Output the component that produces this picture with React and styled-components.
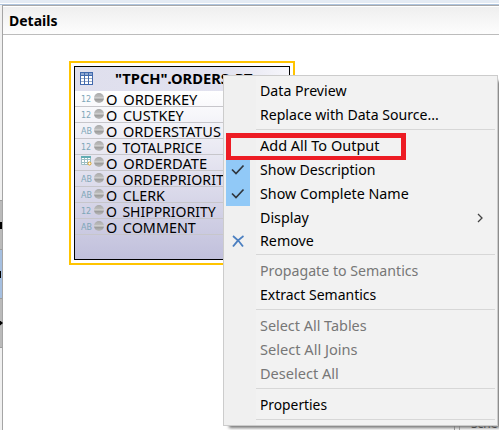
import React from 'react';
import styled, { createGlobalStyle } from 'styled-components';

const Global = createGlobalStyle`
  * { box-sizing: border-box; }
  body { margin: 0; overflow: hidden; background: #fff; font-family: "Noto Sans", "Open Sans", sans-serif; }
`;
const Window = styled.div`
  position: relative; width: 499px; height: 430px; overflow: hidden;
  display: grid; grid-template-rows: 5px minmax(0, 1fr); background: #fff; color: #000;
`;
const TopBar = styled.div`
  background: linear-gradient(#e4ebf4 0 3px, #fff 3px 4px, #aec4de 4px);
`;
const Workspace = styled.div`display: grid; grid-template-columns: 3px minmax(0, 1fr);`;
const Rail = styled.div`background: #f0f0f0; border-right: 1px solid #a5a5a5; padding-top: 195px;`;
const RailTab = styled.div`
  width: 2px; height: 49px; background: ${p => p.$active ? '#a5bfe0' : '#bababa'};
  border-top: 1px solid #9d9d9d; display: flex; align-items: center;
`;
const RailEnd = styled.div`width: 2px; height: 1px; background: #9d9d9d;`;
const RailMark = styled.span`width: ${p => p.$w}px; height: ${p => p.$arrow ? 5 : 7}px; background: #000; flex: none; clip-path: ${p => p.$arrow ? 'polygon(0 0,100% 50%,0 100%)' : 'none'};`;
const Pane = styled.section`border-top: 1px solid #a8a8a8; min-width: 0;`;
const PaneTitle = styled.header`
  height: 29px; border-top: 1px solid #fff; border-bottom: 1px solid #bcbcbc; background: linear-gradient(#efefef, #fdfdfd);
  padding-left: 6px; font-weight: 700; font-size: 14px; line-height: 27px;
`;
const Canvas = styled.div`position: relative;`;
const TableNode = styled.div`
  position: absolute; left: 66px; top: 26px; width: 226px; height: 204px; border: 2px solid #ffc400; padding: 3px; background: #fff;
`;
const TableBody = styled.div`height: 100%; border: 1px solid #000; background: linear-gradient(#fff 24px, #c1c0dc);`;
const TableHead = styled.div`
  height: 24px; background: linear-gradient(90deg, #dfdfed, #e2e2ef 70%, #f6f6fb);
  display: flex; align-items: center; padding: 0 0 2px 5px; gap: 22px; font-weight: 700; font-size: 15px; white-space: nowrap;
`;
const FieldRow = styled.div`
  height: 16px; border-bottom: 1px solid #c7c6cb; display: flex; align-items: center; padding-left: 6px;
`;
const FieldType = styled.span`width: 13px; height: 14px; font: 8px/15px "DejaVu Sans", sans-serif; color: #7da6b8; flex: none;`;
const Ball = styled.span`
  width: 10px; height: 10px; border-radius: 50%; flex: none; margin: 0 2px 2px 0;
  background: linear-gradient(#a9a9a9, #bdbdbd 40%, #dcdcdc 50%, #999 60%, #bcbcbc);
`;
const Fit = styled.span`
  display: block; white-space: pre; flex: none; transform-origin: 0 50%;
`;
const FieldName = styled.span`display: block; font-size: 15px; line-height: 16px; word-spacing: 2px;`;
const Menu = styled.nav`
  position: absolute; left: 223px; top: 75px; width: 275px; height: 351px; z-index: 2;
  border: 1px solid #ccc; background: linear-gradient(90deg, #f0f0f0 0 32px, #f2f2f2 32px);
  padding: 3px 2px 0; box-shadow: 4px 4px 3px -2px #777;
`;
const MenuItem = styled.div`
  height: ${p => p.$short ? 23 : 24}px; display: grid; grid-template-columns: 24px 10px 1fr 18px; align-items: center; color: ${p => p.$disabled ? '#777' : '#000'};
`;
const IconCell = styled.span`
  height: 24px; display: grid; place-items: center; background: ${p => p.$checked ? '#91c9f7' : 'transparent'};
`;
const Label = styled.span`grid-column: 3; font-size: 14px; line-height: 24px;`;
const Separator = styled.div`height: 7px; margin-left: 30px; background: linear-gradient(#d7d7d7, #d7d7d7) 0 2px / 100% 1px no-repeat;`;
const Highlight = styled.div`position: absolute; z-index: 3; left: 226px; top: 133px; width: 180px; height: 27px; border: 4px solid #ed1c24; border-width: 5px 5px 4px;`;
const Below = styled.div`
  position: absolute; left: 454px; bottom: 0; width: 45px; height: 13px; border-left: 1px solid #999; padding-left: 4px;
`;
const BelowText = styled.div`border-left: 1px solid #aaa; height: 13px; padding-left: 11px; font-size: 12px; line-height: 14px;`;

function FitText({ width, children }) {
  const ref = React.useRef(null);
  const [scale, setScale] = React.useState(1);
  React.useLayoutEffect(() => { setScale(width / ref.current.offsetWidth); }, [width]);
  return <Fit ref={ref} style={{ transform: `scaleX(${scale})`, width: 'max-content' }}>{children}</Fit>;
}
const GridIcon = () => <svg width="13" height="13" viewBox="0 0 13 13" shapeRendering="crispEdges">
  <path fill="#fff" d="M0 0h13v13H0z"/><path fill="#8fa9d2" d="M0 0h13v3H0z"/>
  <path fill="none" stroke="#9dacc6" d="M1 6.5h12M1 9.5h12"/><path fill="none" stroke="#4169ad" d="M.5.5h12v12H.5zM4.5 0v13M8.5 0v13M0 3.5h13"/>
</svg>;
const DateIcon = () => <svg width="11" height="10" viewBox="0 0 11 10">
  <path fill="#fff" stroke="#9dbec4" d="M.5.5h9v8h-9zM3.5 1v8M6.5 1v8M1 3.5h9M1 6.5h9"/><path fill="#62acb2" d="M0 0h10v2H0z"/><circle cx="8.5" cy="7.5" r="1.5" fill="#fff" stroke="#e0a021"/>
</svg>;
const Check = () => <svg width="14" height="12" viewBox="0 0 14 12"><path d="M1 5.5l4 4 7.5-8" fill="none" stroke="#30363d" strokeWidth="1.7"/></svg>;
const Cross = () => <svg width="13" height="13" viewBox="0 0 13 13"><path d="M1 1c4 3 7 6 10 10.5M11.5 1C7 4 4 7 1 11.5" fill="none" stroke="#4b7fc0" strokeWidth="1.8"/></svg>;
const Arrow = () => <svg width="6" height="10" viewBox="0 0 6 10"><path d="M1 1l4 4-4 4" fill="none" stroke="#444" strokeWidth="1.3"/></svg>;

const fields = [
  ['12', 'O_ORDERKEY', 91], ['12', 'O_CUSTKEY', 78], ['AB', 'O_ORDERSTATUS', 115], ['12', 'O_TOTALPRICE', 96], ['date', 'O_ORDERDATE', 101],
  ['AB', 'O_ORDERPRIORITY', 126], ['AB', 'O_CLERK', 59], ['12', 'O_SHIPPRIORITY', 110], ['AB', 'O_COMMENT', 90],
];
const items = [
  ['Data Preview', 87], ['Replace with Data Source...', 179], null, ['Add All To Output', 120], ['Show Description', 116, 'check'],
  ['Show Complete Name', 149, 'check'], ['Display', 49, 'arrow'], ['Remove', 54, 'cross'], null,
  ['Propagate to Semantics', 158, 'disabled'], ['Extract Semantics', 116], null, ['Select All Tables', 107, 'disabled'],
  ['Select All Joins', 98, 'disabled'], ['Deselect All', 79, 'disabled'], null, ['Properties', 67], null,
];

export default function App() {
  return <><Global /><Window>
    <TopBar />
    <Workspace>
      <Rail><RailTab><RailMark $w={2}/></RailTab><RailTab $active><RailMark $w={1}/></RailTab><RailTab><RailMark $w={3} $arrow/></RailTab><RailEnd /></Rail>
      <Pane><PaneTitle><FitText width={48}>Details</FitText></PaneTitle>
        <Canvas><TableNode><TableBody>
          <TableHead><GridIcon /><FitText width={138}>"TPCH".ORDERS_PT</FitText></TableHead>
          {fields.map(([type, name, width]) => <FieldRow key={name}><FieldType>{type === 'date' ? <DateIcon /> : type}</FieldType><Ball /><FieldName><FitText width={width}>{name.replace('_', ' ')}</FitText></FieldName></FieldRow>)}
        </TableBody></TableNode></Canvas>
      </Pane>
    </Workspace>
    <Below><BelowText>Sche</BelowText></Below>
    <Menu>{items.map((item, i) => item ? <MenuItem key={i} $disabled={item[2] === 'disabled'} $short={item[2] === 'arrow' || item[2] === 'cross'}>
      <IconCell $checked={item[2] === 'check'}>{item[2] === 'check' ? <Check /> : item[2] === 'cross' ? <Cross /> : null}</IconCell>
      <Label><FitText width={item[1]}>{item[0]}</FitText></Label>{item[2] === 'arrow' && <Arrow />}
    </MenuItem> : <Separator key={i} />)}</Menu>
    <Highlight />
  </Window></>;
}
